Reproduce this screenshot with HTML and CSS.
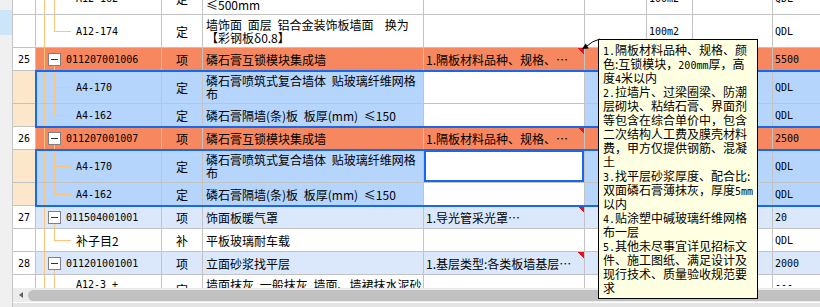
FILE: index.html
```html
<!doctype html>
<html>

<head>
    <meta charset="UTF-8">
    <link rel="stylesheet" href="styles.css">
    <title>清单</title>
</head>

<body>
    <div class="app">
        <div class="gutter">
            <div class="gutter-mark"></div>
        </div>

        <div class="main">
            <div class="sheet">
                <div class="rows">
                    <div class="row tall">
                        <div class="c num"></div>
                        <div class="c code leaf mid mono">A12-162</div>
                        <div class="c type">定</div>
                        <div class="c name">墙饰面 龙骨 轻钢龙骨 中距<br>≤500mm</div>
                        <div class="c feat"></div>
                        <div class="c"></div>
                        <div class="c mono">100m2</div>
                        <div class="c"></div>
                        <div class="c mono">QDL</div>
                    </div>
                    <div class="row tall">
                        <div class="c num"></div>
                        <div class="c code leaf mono">A12-174</div>
                        <div class="c type">定</div>
                        <div class="c name">墙饰面 面层 铝合金装饰板墙面&nbsp; 换为<br>【彩钢板δ0.8】</div>
                        <div class="c feat"></div>
                        <div class="c"></div>
                        <div class="c mono">100m2</div>
                        <div class="c"></div>
                        <div class="c mono">QDL</div>
                    </div>
                    <div class="row item">
                        <div class="c num mono">25</div>
                        <div class="c code parent mono"><span class="box"></span>011207001006</div>
                        <div class="c type">项</div>
                        <div class="c name">磷石膏互锁模块集成墙</div>
                        <div class="c feat flag">1.隔板材料品种、规格、…</div>
                        <div class="c"></div>
                        <div class="c"></div>
                        <div class="c"></div>
                        <div class="c mono">5500</div>
                    </div>

                    <div class="group">
                        <div class="row tall sel">
                            <div class="c num"></div>
                            <div class="c code leaf mid mono">A4-170</div>
                            <div class="c type">定</div>
                            <div class="c name">磷石膏喷筑式复合墙体 贴玻璃纤维网格<br>布</div>
                            <div class="c feat"></div>
                            <div class="c"></div>
                            <div class="c"></div>
                            <div class="c"></div>
                            <div class="c mono">QDL</div>
                        </div>
                        <div class="row sel">
                            <div class="c num"></div>
                            <div class="c code leaf mono">A4-162</div>
                            <div class="c type">定</div>
                            <div class="c name">磷石膏隔墙(条)板 板厚(mm) ≤150</div>
                            <div class="c feat"></div>
                            <div class="c"></div>
                            <div class="c"></div>
                            <div class="c"></div>
                            <div class="c mono">QDL</div>
                        </div>
                    </div>

                    <div class="row item">
                        <div class="c num mono">26</div>
                        <div class="c code parent mono"><span class="box"></span>011207001007</div>
                        <div class="c type">项</div>
                        <div class="c name">磷石膏互锁模块集成墙</div>
                        <div class="c feat flag">1.隔板材料品种、规格、…</div>
                        <div class="c"></div>
                        <div class="c"></div>
                        <div class="c"></div>
                        <div class="c mono">2500</div>
                    </div>

                    <div class="group">
                        <div class="row tall sel">
                            <div class="c num"></div>
                            <div class="c code leaf mid mono">A4-170</div>
                            <div class="c type">定</div>
                            <div class="c name">磷石膏喷筑式复合墙体 贴玻璃纤维网格<br>布</div>
                            <div class="c feat cur"></div>
                            <div class="c"></div>
                            <div class="c"></div>
                            <div class="c"></div>
                            <div class="c mono">QDL</div>
                        </div>
                        <div class="row sel">
                            <div class="c num"></div>
                            <div class="c code leaf mono">A4-162</div>
                            <div class="c type">定</div>
                            <div class="c name">磷石膏隔墙(条)板 板厚(mm) ≤150</div>
                            <div class="c feat"></div>
                            <div class="c"></div>
                            <div class="c"></div>
                            <div class="c"></div>
                            <div class="c mono">QDL</div>
                        </div>
                    </div>

                    <div class="row alt">
                        <div class="c num mono">27</div>
                        <div class="c code parent mono"><span class="box"></span>011504001001</div>
                        <div class="c type">项</div>
                        <div class="c name">饰面板暖气罩</div>
                        <div class="c feat flag">1.导光管采光罩…</div>
                        <div class="c"></div>
                        <div class="c"></div>
                        <div class="c"></div>
                        <div class="c mono">20</div>
                    </div>
                    <div class="row">
                        <div class="c num"></div>
                        <div class="c code leaf">补子目2</div>
                        <div class="c type">补</div>
                        <div class="c name">平板玻璃耐车载</div>
                        <div class="c feat"></div>
                        <div class="c"></div>
                        <div class="c"></div>
                        <div class="c"></div>
                        <div class="c mono">QDL</div>
                    </div>
                    <div class="row alt">
                        <div class="c num mono">28</div>
                        <div class="c code parent mono"><span class="box"></span>011201001001</div>
                        <div class="c type">项</div>
                        <div class="c name">立面砂浆找平层</div>
                        <div class="c feat flag">1.基层类型:各类板墙基层…</div>
                        <div class="c"></div>
                        <div class="c"></div>
                        <div class="c"></div>
                        <div class="c mono">2000</div>
                    </div>
                    <div class="row tall top">
                        <div class="c num"></div>
                        <div class="c code leaf mid mono">A12-3 +</div>
                        <div class="c type">定</div>
                        <div class="c name">墙面抹灰 一般抹灰 墙面、墙裙抹水泥砂<br>浆 轻质墙</div>
                        <div class="c feat"></div>
                        <div class="c"></div>
                        <div class="c"></div>
                        <div class="c"></div>
                        <div class="c mono">---</div>
                    </div>
                </div>
            </div>

            <div class="hscroll">
                <span class="arrow"></span>
                <span class="thumb"></span>
            </div>
            <div class="foot"></div>
        </div>

        <!-- comment popup for row 25 -->
        <svg class="pointer" width="24" height="18" viewBox="0 0 24 18">
            <path d="M9 12 Q14 7 22 5" fill="none" stroke="#000" stroke-width="1"/>
            <polygon points="4,15 7.7,9.4 10.7,14.6" fill="#000"/>
        </svg>
        <div class="tip">
            <span class="lat">1.</span>隔板材料品种、规格、颜<br>
            色:互锁模块，<span class="lat">200mm</span>厚，高<br>
            度<span class="lat">4</span>米以内<br>
            <span class="lat">2.</span>拉墙片、过梁圈梁、防潮<br>
            层砌块、粘结石膏、界面剂<br>
            等包含在综合单价中，包含<br>
            二次结构人工费及膜壳材料<br>
            费，甲方仅提供钢筋、混凝<br>
            土<br>
            <span class="lat">3.</span>找平层砂浆厚度、配合比:<br>
            双面磷石膏薄抹灰，厚度<span class="lat">5mm</span><br>
            以内<br>
            <span class="lat">4.</span>贴涂塑中碱玻璃纤维网格<br>
            布一层<br>
            <span class="lat">5.</span>其他未尽事宜详见招标文<br>
            件、施工图纸、满足设计及<br>
            现行技术、质量验收规范要<br>
            求
        </div>
    </div>
</body>

</html>
```

FILE: styles.css
```css
* {
    box-sizing: border-box;
}

body {
    margin: 0;
    font: 12px/13px "Noto Sans CJK SC", sans-serif;
    color: #000;
    word-spacing: 3px;
    background: #fff;
    overflow: hidden;
}

.app {
    position: relative;
    display: flex;
    width: 820px;
    height: 307px;
    overflow: hidden;
}

.gutter {
    flex: none;
    width: 13px;
    padding-top: 10px;
    background: #f0f0f0;
    border-right: 1px solid #c6c6c6;
}

.gutter-mark {
    height: 25px;
    background: #cde5f8;
}

.main {
    flex: 1;
    min-width: 0;
    display: flex;
    flex-direction: column;
}

.sheet {
    height: 288px;
    overflow: hidden;
}

.rows {
    margin-top: -18px;
}

/* grid rows */
.row {
    display: grid;
    grid-template-columns: 23px 126px 41px 221px 161px 62px 46px 80px 80px;
    height: 23px;
    background: #fff;
}

.row.tall {
    height: 33px;
}

.row.item {
    background: #f7875f;
}

.row.sel {
    background: #b5d5fd;
}

.row.alt {
    background: #dbe8fc;
}

.c {
    display: flex;
    align-items: center;
    padding: 0 2px;
    overflow: hidden;
    white-space: nowrap;
    border-right: 1px solid #c3c3c3;
    border-bottom: 1px solid #c3c3c3;
}

.row.top .c {
    align-items: flex-start;
    padding-top: 3px;
}

.row.top .type {
    padding-top: 8px;
}

.mono,
.lat {
    font-family: "DejaVu Sans Mono", monospace;
    font-size: 10px;
    word-spacing: 0;
}

.lat {
    line-height: 10px;
}

.num {
    justify-content: center;
    background: #fff;
}

.sel .num {
    background: #fde7cb;
}

.type {
    justify-content: center;
}

.name {
    padding-left: 3px;
}

.sel .feat {
    background: #fff;
}

.feat.cur {
    box-shadow: inset 0 0 0 2px #1668f0;
}

.flag {
    background-image: linear-gradient(to bottom left, #e8141b 50%, transparent 50%);
    background-size: 7px 6px;
    background-position: right 0 top 0;
    background-repeat: no-repeat;
}

/* tree lines */
.code {
    --tree: #fbc47a;
    background-image: linear-gradient(var(--tree), var(--tree));
    background-position: 8px 0;
    background-size: 1px 100%;
    background-repeat: no-repeat;
}

.code.parent {
    padding-left: 12px;
    background-image: linear-gradient(var(--tree), var(--tree)), linear-gradient(var(--tree), var(--tree));
    background-position: 8px 0, 18px 100%;
    background-size: 1px 100%, 1px 6px;
}

.code.leaf {
    padding-left: 40px;
    background-image: linear-gradient(var(--tree), var(--tree)), linear-gradient(var(--tree), var(--tree)), linear-gradient(var(--tree), var(--tree));
    background-position: 8px 0, 18px 0, 18px 50%;
    background-size: 1px 100%, 1px 50%, 17px 1px;
}

.code.leaf.mid {
    background-size: 1px 100%, 1px 100%, 17px 1px;
}

.box {
    flex: none;
    width: 13px;
    height: 13px;
    margin-right: 5px;
    border: 1px solid #808080;
    background: #fff linear-gradient(#333, #333) center / 7px 1px no-repeat;
}

/* selected groups */
.group {
    position: relative;
}

.group::after {
    content: "";
    position: absolute;
    top: -1px;
    bottom: -1px;
    left: 22px;
    right: -10px;
    border: 2px solid #1668f0;
    border-right: 0;
    pointer-events: none;
}

/* scrollbar */
.hscroll {
    display: flex;
    align-items: center;
    height: 14px;
    padding-left: 6px;
    background: #ececec;
}

.arrow {
    width: 0;
    height: 0;
    border-top: 3px solid transparent;
    border-bottom: 3px solid transparent;
    border-right: 4px solid #606060;
}

.thumb {
    flex: 1;
    height: 11px;
    margin-left: 5px;
    border-radius: 6px 0 0 6px;
    background: #c1c1c1;
}

.foot {
    flex: 1;
    border-top: 1px solid #fff;
    background: #e4e4e4;
}

/* note popup */
.pointer {
    position: absolute;
    left: 578px;
    top: 34px;
}

.tip {
    position: absolute;
    left: 598px;
    top: 39px;
    width: 160px;
    height: 260px;
    padding: 3px 0 0 4px;
    background: #ffffe1;
    border: 1px solid #000;
    line-height: 14px;
    white-space: nowrap;
    word-spacing: 0;
}
```
